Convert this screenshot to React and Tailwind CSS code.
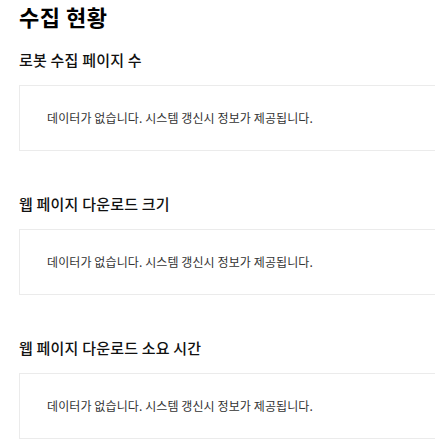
import React from 'react';

const sections = [
    "로봇 수집 페이지 수",
    "웹 페이지 다운로드 크기",
    "웹 페이지 다운로드 소요 시간",
];

const EmptyBox = () => (
    <div className={`w-[480px] h-[66px] border border-[#ebebeb] bg-white flex items-center pl-[27px]`}>
        <p className={`text-[12px] leading-[18px] tracking-[0.1px] text-[#333]`}>데이터가 없습니다. 시스템 갱신시 정보가 제공됩니다.</p>
    </div>
);

const App = () => {
    return (
        <div className={`w-full h-[446px] overflow-hidden bg-white px-[19px]`} style={{fontFamily: '"Noto Sans CJK KR", "Noto Sans", sans-serif'}}>
            <h1 className={`text-[22px] leading-[33px] font-bold tracking-[0.5px] text-black`}>수집 현황</h1>
            {sections.map((title, index) => (
                <section key={index} className={index === 0 ? `mt-4` : `mt-[42px]`}>
                    <h3 className={`text-[15px] leading-[22px] font-medium tracking-[0.2px] text-[#111] mb-[14px]`}>{title}</h3>
                    <EmptyBox />
                </section>
            ))}
        </div>
    );
};

export default App;
